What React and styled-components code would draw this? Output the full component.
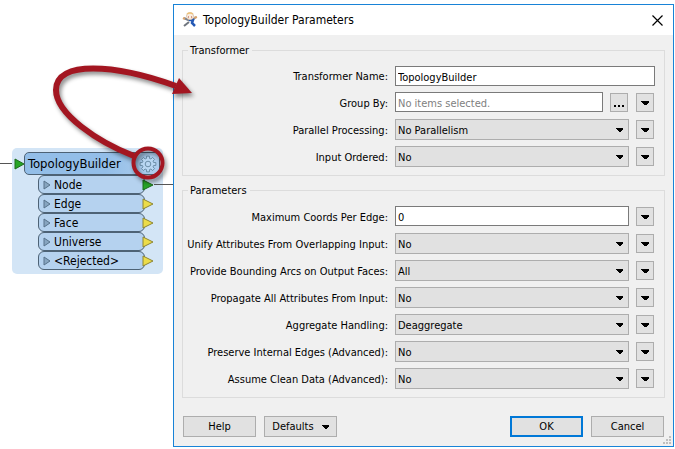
import { useState } from "react";
import styled, { createGlobalStyle, css } from "styled-components";

const GlobalStyle = createGlobalStyle`
  * {
    box-sizing: border-box;
  }

  body {
    margin: 0;
    background-color: #fff;
    color: #000;
    font-family: Tahoma, "DejaVu Sans Condensed", "Noto Sans", sans-serif;
    font-size: 11px;
    line-height: 16px;
  }

  button,
  input,
  select {
    margin: 0;
    color: inherit;
    font: inherit;
  }
`;

const Page = styled.main`
  position: relative;
  display: flex;
  align-items: flex-start;
  padding: 4px 1px 2px 0;
`;

const Canvas = styled.section`
  display: flex;
  flex: 0 0 173px;
  align-items: flex-start;
  padding-top: 144px;
`;

const Wire = styled.span`
  flex: ${({ $width }) => ($width ? `0 0 ${$width}px` : 1)};
  height: 1px;
  margin-top: ${({ $top }) => $top || 0}px;
  background-color: #555;
`;

const Node = styled.div`
  flex: 0 0 151px;
  padding: 4px 0 4px 2px;
  border-radius: 5px;
  background-color: #d3e5f6;
`;

const NodeHeader = styled.div`
  display: flex;
  align-items: center;
  height: 23px;
  padding-right: 3px;
`;

const NodeTitle = styled.div`
  display: flex;
  flex: 1;
  align-items: center;
  justify-content: space-between;
  height: 23px;
  margin-left: -1px;
  padding: 0 2px 0 3px;
  border: 1px solid #4d6275;
  border-radius: 5px;
  background: linear-gradient(90deg, #93bee8 60%, #b0cfee);
  font-size: 13px;
`;

const GearButton = styled.button`
  display: flex;
  padding: 0;
  border: none;
  background: none;
`;

const PortList = styled.ul`
  margin: 0;
  padding: 0 0 0 24px;
  list-style: none;
`;

const Port = styled.li`
  display: flex;
  align-items: center;
  height: 19px;
`;

const PortLabel = styled.span`
  display: flex;
  align-items: center;
  gap: 3px;
  width: 107px;
  height: 19px;
  padding-left: 4px;
  border: 1px solid #4d6275;
  border-radius: 6px;
  background-color: #b5d2ef;
  font-size: 12px;
`;

const PortArrow = styled.svg`
  margin-left: -3px;
`;

const Dialog = styled.form`
  flex: 1;
  min-width: 0;
  border: 1px solid #1883d7;
  background-color: #f0f0f0;
`;

const TitleBar = styled.header`
  display: flex;
  align-items: center;
  gap: 5px;
  height: 30px;
  padding: 0 10px 0 8px;
  background-color: #fff;
`;

const DialogTitle = styled.h1`
  flex: 1;
  margin: 0;
  font-size: 12px;
  font-weight: normal;
`;

const CloseButton = styled.button`
  display: flex;
  padding: 0;
  border: none;
  background: none;
`;

const Body = styled.div`
  display: flex;
  flex-direction: column;
  gap: 6px;
  padding: 7px 8px 0;
`;

const Group = styled.fieldset`
  display: flex;
  flex-direction: column;
  gap: 6px;
  min-width: 0;
  margin: 0;
  padding: 8px 9px 8px 0;
  border: 1px solid #dcdcdc;
`;

const Legend = styled.legend`
  margin-left: 5px;
  padding: 2px 3px 0 2px;
  line-height: 14px;
`;

const Row = styled.div`
  display: flex;
  align-items: center;
  gap: 7px;
  height: ${({ $short }) => ($short ? 20 : 21)}px;
`;

const Label = styled.label`
  flex: 0 0 205px;
  padding-top: 2px;
  text-align: right;
  white-space: nowrap;
`;

const TextInput = styled.input`
  flex: 1;
  align-self: flex-start;
  min-width: 0;
  height: 20px;
  padding: 2px 2px 0;
  border: 1px solid #7a7a7a;
  border-radius: 0;
  background-color: #fff;

  &::placeholder {
    color: #808080;
    opacity: 1;
  }
`;

const SelectBox = styled.div`
  display: grid;
  flex: 1;
  align-items: center;
  min-width: 0;

  > * {
    grid-area: 1 / 1;
  }

  > svg {
    justify-self: end;
    margin-right: 6px;
    pointer-events: none;
  }
`;

const Select = styled.select`
  width: 100%;
  height: 21px;
  padding: 2px 20px 0 2px;
  border: 1px solid #adadad;
  border-radius: 0;
  background-color: #e1e1e1;
  appearance: none;
`;

const buttonFace = css`
  display: flex;
  align-items: center;
  justify-content: center;
  padding: 0;
  border: 1px solid #adadad;
  background-color: #e1e1e1;
`;

const SmallButton = styled.button`
  ${buttonFace}
  flex: 0 0 18px;
  height: 19px;
  margin-right: 1px;
`;

const Footer = styled.footer`
  display: flex;
  gap: 8px;
  padding: 18px 9px 9px;
`;

const PushButton = styled.button`
  ${buttonFace}
  gap: 8px;
  width: 73px;
  height: 21px;
  ${({ $primary }) => $primary && "border: 2px solid #0078d7;"}
`;

const Spacer = styled.span`
  flex: 1;
`;

const Grip = styled.svg`
  position: absolute;
  right: 4px;
  bottom: 5px;
`;

const Callout = styled.svg`
  position: absolute;
  top: 0;
  left: 0;
  pointer-events: none;
  filter: drop-shadow(2px 3px 2px rgba(0, 0, 0, 0.45));
`;

const gearPoints = Array.from({ length: 8 }, (_, i) => {
  const at = (r, offset) => {
    const a = (i * Math.PI) / 4 + offset;
    return `${(9 + r * Math.cos(a)).toFixed(2)},${(9 + r * Math.sin(a)).toFixed(2)}`;
  };
  return [at(5.8, -0.26), at(8, -0.18), at(8, 0.18), at(5.8, 0.26)].join(" ");
}).join(" ");

const GearIcon = () => (
  <svg width="18" height="18" fill="none" stroke="#64879f" strokeWidth="0.9">
    <polygon points={gearPoints} fill="#b9d7f2" />
    <circle cx="9" cy="9" r="2.8" />
  </svg>
);

const DownArrow = ({ size = 7 }) => (
  <svg width={size} height="4" shapeRendering="crispEdges">
    <path d={`M0 0H${size}V1L${size - 3} 4H3L0 1Z`} />
  </svg>
);

const WorkbenchIcon = () => (
  <svg width="16" height="16" fill="none">
    <path d="M2 6L6 8L10 8L14 5" stroke="#7d838f" strokeWidth="2" />
    <path d="M1 6L3 7M12 6L15 5" stroke="#d9a36b" strokeWidth="2" />
    <path d="M7 8H11L10 11L13 14" stroke="#2459b5" strokeWidth="2.5" />
    <path d="M7 10L2 14" stroke="#6f757e" strokeWidth="2" />
    <circle cx="8" cy="4" r="3.5" fill="#fbeee0" stroke="#ddc9b2" />
    <path d="M5 2Q8 0 11 2" stroke="#eec27a" strokeWidth="1.5" />
    <path d="M6 5H7M9 5H10" stroke="#b0432f" />
  </svg>
);

const ports = ["Node", "Edge", "Face", "Universe", "<Rejected>"];

const transformerFields = [
  { id: "name", label: "Transformer Name:", type: "text", value: "TopologyBuilder", wide: true },
  { id: "groupBy", label: "Group By:", type: "text", value: "", placeholder: "No items selected.", browse: true },
  { id: "parallel", label: "Parallel Processing:", value: "No Parallelism" },
  { id: "ordered", label: "Input Ordered:", value: "No" },
];

const parameterFields = [
  { id: "maxCoords", label: "Maximum Coords Per Edge:", type: "text", value: "0" },
  { id: "unify", label: "Unify Attributes From Overlapping Input:", value: "No" },
  { id: "arcs", label: "Provide Bounding Arcs on Output Faces:", value: "All" },
  { id: "propagate", label: "Propagate All Attributes From Input:", value: "No" },
  { id: "aggregate", label: "Aggregate Handling:", value: "Deaggregate" },
  { id: "preserve", label: "Preserve Internal Edges (Advanced):", value: "No" },
  { id: "clean", label: "Assume Clean Data (Advanced):", value: "No" },
];

const Field = ({ field }) => {
  const [value, setValue] = useState(field.value);
  const onChange = (e) => setValue(e.target.value);

  return (
    <Row $short={field.wide}>
      <Label htmlFor={field.id}>{field.label}</Label>
      {field.type === "text" ? (
        <TextInput
          id={field.id}
          type="text"
          value={value}
          placeholder={field.placeholder}
          onChange={onChange}
        />
      ) : (
        <SelectBox>
          <Select id={field.id} value={value} onChange={onChange}>
            <option>{field.value}</option>
          </Select>
          <DownArrow />
        </SelectBox>
      )}
      {field.browse && (
        <SmallButton type="button" aria-label="Browse">
          <svg width="10" height="8" shapeRendering="crispEdges">
            <path d="M0 6h2v2H0zM4 6h2v2H4zM8 6h2v2H8z" />
          </svg>
        </SmallButton>
      )}
      {!field.wide && (
        <SmallButton type="button" aria-label={`${field.label} options`}>
          <DownArrow size={8} />
        </SmallButton>
      )}
    </Row>
  );
};

const TransformerNode = () => (
  <Canvas>
    <Wire $width={12} $top={15} />
    <Node>
      <NodeHeader>
        <svg width="11" height="12">
          <path d="M1 1L10 6L1 11Z" fill="#27a527" stroke="#1c6b1c" />
        </svg>
        <NodeTitle>
          TopologyBuilder
          <GearButton type="button" aria-label="Parameters">
            <GearIcon />
          </GearButton>
        </NodeTitle>
      </NodeHeader>
      <PortList>
        {ports.map((port, i) => (
          <Port key={port}>
            <PortLabel>
              <svg width="8" height="10">
                <path d="M1 1L7 5L1 9Z" fill="#87a5c0" stroke="#58738b" />
              </svg>
              {port}
            </PortLabel>
            <PortArrow width="12" height="12">
              <path
                d="M1 1L11 6L1 11Z"
                fill={i === 0 ? "#27a527" : "#ecdc4a"}
                stroke={i === 0 ? "#1c6b1c" : "#8d8634"}
              />
            </PortArrow>
            {i === 0 && <Wire />}
          </Port>
        ))}
      </PortList>
    </Node>
    <Wire $top={36} />
  </Canvas>
);

const App = () => {
  return (
    <>
      <GlobalStyle />
      <Page>
        <TransformerNode />
        <Dialog onSubmit={(e) => e.preventDefault()}>
          <TitleBar>
            <WorkbenchIcon />
            <DialogTitle>TopologyBuilder Parameters</DialogTitle>
            <CloseButton type="button" aria-label="Close">
              <svg width="11" height="11" stroke="#000" strokeWidth="1.2">
                <path d="M0.5 0.5L10.5 10.5M10.5 0.5L0.5 10.5" />
              </svg>
            </CloseButton>
          </TitleBar>
          <Body>
            <Group>
              <Legend>Transformer</Legend>
              {transformerFields.map((field) => (
                <Field key={field.id} field={field} />
              ))}
            </Group>
            <Group>
              <Legend>Parameters</Legend>
              {parameterFields.map((field) => (
                <Field key={field.id} field={field} />
              ))}
            </Group>
          </Body>
          <Footer>
            <PushButton type="button">Help</PushButton>
            <PushButton type="button">
              Defaults
              <DownArrow />
            </PushButton>
            <Spacer />
            <PushButton type="submit" $primary>
              OK
            </PushButton>
            <PushButton type="button">Cancel</PushButton>
          </Footer>
        </Dialog>
        <Grip width="8" height="8" fill="#bfbfbf">
          <path d="M6 0h2v2H6zM3 3h2v2H3zM6 3h2v2H6zM0 6h2v2H0zM3 6h2v2H3zM6 6h2v2H6z" />
        </Grip>
        <Callout width="200" height="190" fill="none" stroke="#a31621">
          <path d="M134 156C98 142 56 114 56 90C56 60 115 64 176 86" strokeWidth="6" />
          <path d="M179 78L192 93L172 94Z" fill="#a31621" stroke="none" />
          <circle cx="148" cy="163" r="14.5" strokeWidth="4" />
        </Callout>
      </Page>
    </>
  );
};

export default App;
